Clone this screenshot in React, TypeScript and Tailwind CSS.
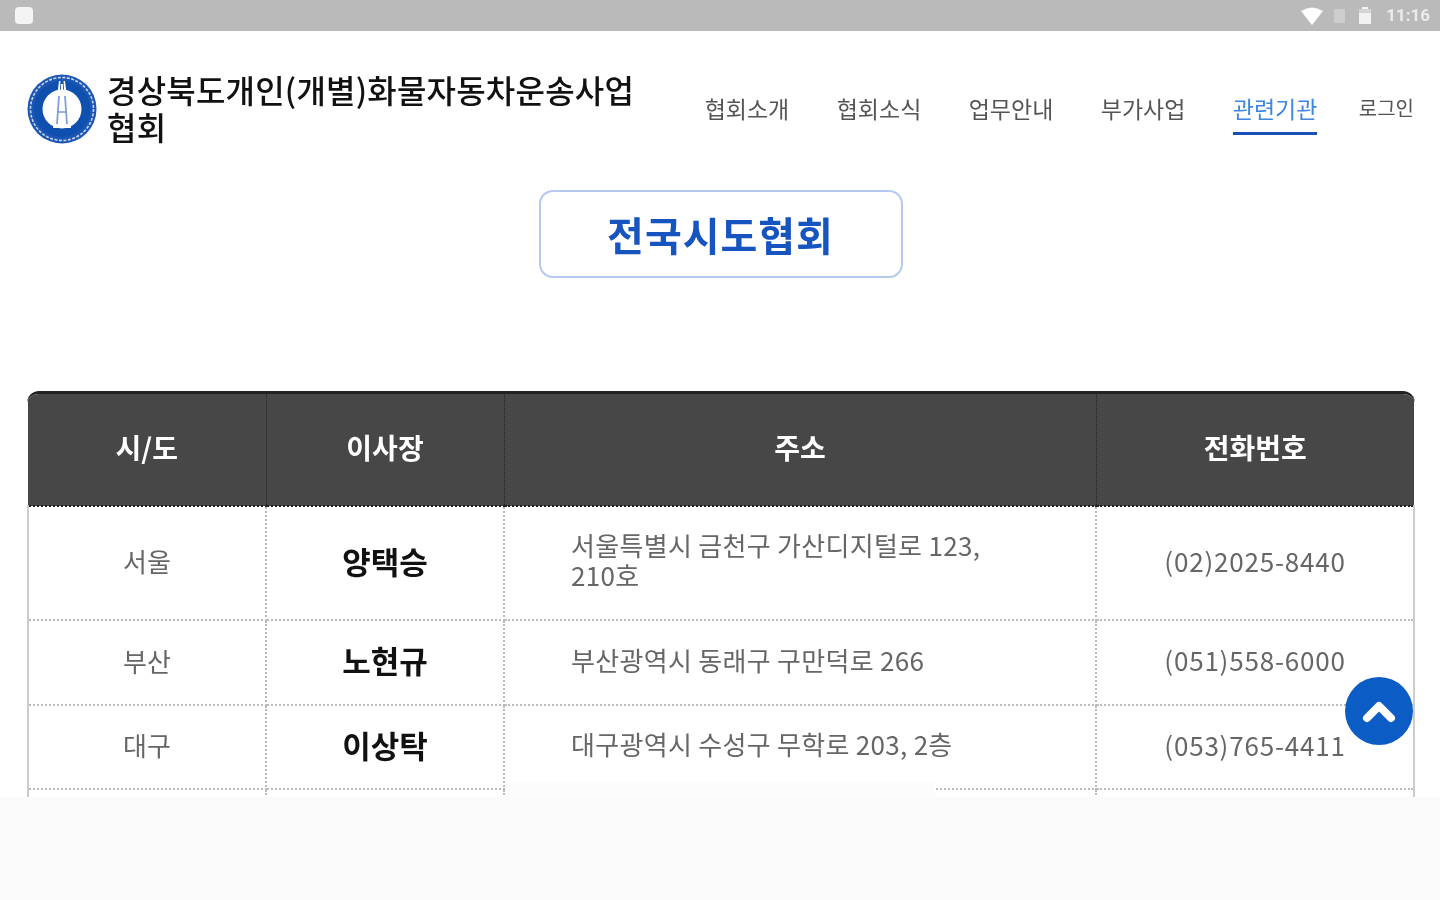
import React from 'react';

const font = { fontFamily: '"Noto Sans CJK KR", "Noto Sans", sans-serif' };

const navItems = ['협회소개', '협회소식', '업무안내', '부가사업', '관련기관'];

const rows = [
  { region: '서울', name: '양택승', address: '서울특별시 금천구 가산디지털로 123, 210호', phone: '(02)2025-8440', height: 'h-[114px]' },
  { region: '부산', name: '노현규', address: '부산광역시 동래구 구만덕로 266', phone: '(051)558-6000', height: 'h-[85px]' },
  { region: '대구', name: '이상탁', address: '대구광역시 수성구 무학로 203, 2층', phone: '(053)765-4411', height: 'h-[84px]' },
  { region: '', name: '', address: '', phone: '', height: 'h-[84px]' },
];

const Logo = () => (
  <svg width="70" height="70" viewBox="0 0 70 70" className="shrink-0">
    <circle cx="35" cy="35" r="34.5" fill="#1c56b4" />
    <circle cx="35" cy="35" r="31.5" fill="none" stroke="#c9d8f0" strokeWidth="1.6" strokeDasharray="3 1.5" />
    <circle cx="35" cy="35" r="28" fill="#0f4fae" />
    <circle cx="35" cy="35" r="19.5" fill="#ffffff" />
    <path d="M32 7 L26 54 L31 54 L33.5 7 Z" fill="#ffffff" />
    <path d="M38 7 L44 54 L39 54 L36.5 7 Z" fill="#ffffff" />
    <path d="M34 10 H36 V18 H34 Z" fill="#ffffff" />
    <path d="M32 22 L30 50 M38 22 L40 50" stroke="#7f9fd6" strokeWidth="1.8" />
    <path d="M31 38 H39" stroke="#7f9fd6" strokeWidth="1.6" />
  </svg>
);

const App = () => {
  return (
    <div className="flex h-[900px] w-full flex-col overflow-hidden bg-white blur-[0.7px]" style={font}>
      {/* Status bar */}
      <div className="flex h-[31px] shrink-0 items-center justify-between bg-[#bababa] pl-[15px] pr-[10px]">
        <div className="h-[17px] w-[18px] rounded-[4px] bg-[#f4f4f4]" />
        <div className="flex items-center">
          <svg width="24" height="18" viewBox="0 0 24 18">
            <path d="M1 4 Q12 -3 23 4 L12 18 Z" fill="#ffffff" />
          </svg>
          <div className="ml-[10px] h-[14px] w-[11px] bg-[#cdcdcd]" />
          <svg width="14" height="18" viewBox="0 0 14 18" className="ml-[13px]">
            <path d="M4 0 H10 V2 H13 V17 H1 V2 H4 Z" fill="#f2f2f2" />
            <path d="M1 2 H13 V6 H1 Z" fill="#d4d4d4" />
          </svg>
          <span className="ml-[14px] text-[17px] font-bold text-[#ececec]" style={{ fontFamily: 'Roboto, sans-serif' }}>
            11:16
          </span>
        </div>
      </div>

      <div className="relative min-h-0 flex-1 overflow-hidden">
        {/* Header */}
        <header className="flex items-center justify-between pl-[27px] pr-[26px] pt-[41px]">
          <div className="flex items-center">
            <Logo />
            <h1 className="ml-[10px] w-[540px] -translate-y-px text-[32px] font-medium leading-[37px] tracking-[0.2px] text-[#111]">
              경상북도개인(개별)화물자동차운송사업 협회
            </h1>
          </div>
          <nav className="flex items-center gap-[47.4px] pt-[8px] text-[23px] text-[#555]">
            {navItems.map((item, i) => (
              <a
                key={item}
                className={`border-b-[3px] pb-[7px] ${i === 4 ? 'border-[#1a4fb5] text-[#3f86e0]' : 'border-transparent'}`}
              >
                {item}
              </a>
            ))}
            <a className="-ml-[6px] border-b-[3px] border-transparent pb-[8px] text-[20px]">로그인</a>
          </nav>
        </header>

        {/* Title */}
        <div className="mt-[44px] flex justify-center">
          <div className="ml-[1px] flex h-[88px] w-[364px] items-center justify-center rounded-[14px] border-2 border-[#b3c9ee] text-[40px] font-bold tracking-[1px] text-[#1654c0]">
            전국시도협회
          </div>
        </div>

        {/* Table */}
        <div className="ml-[27px] mr-[25px] mt-[113px] overflow-hidden rounded-t-[12px] border-t-[3px] border-[#222]">
          <table className="w-full table-fixed border-collapse text-center">
            <thead>
              <tr className="h-[112px] bg-[#474747] text-[28px] font-bold text-white">
                <th className="w-[238px] border-r border-b-2 border-dotted border-[#222] pb-[6px] font-bold">시/도</th>
                <th className="w-[238px] border-r border-b-2 border-dotted border-[#222] pb-[6px] font-bold">이사장</th>
                <th className="w-[592px] border-r border-b-2 border-dotted border-[#222] pb-[6px] font-bold">주소</th>
                <th className="border-b-2 border-dotted border-[#222] pb-[6px] font-bold">전화번호</th>
              </tr>
            </thead>
            <tbody>
              {rows.map((row, i) => (
                <tr key={i} className={`${row.height} text-[26px] text-[#666]`}>
                  <td className="border-r-2 border-b-2 border-l-2 border-dotted border-[#bbb] border-l-[#ccc] pb-[5px] [border-left-style:solid]">
                    {row.region}
                  </td>
                  <td className="border-r-2 border-b-2 border-dotted border-[#bbb] pb-[4px] text-[31px] font-bold text-[#111]">
                    {row.name}
                  </td>
                  <td className="break-keep border-r-2 border-b-2 border-dotted border-[#bbb] px-[66px] pb-[6px] text-left leading-[30px] tracking-[0.3px]">
                    {row.address}
                  </td>
                  <td className="border-r-2 border-b-2 border-dotted border-[#bbb] border-r-[#ccc] pb-[6px] tracking-[0.8px] [border-right-style:solid]">
                    {row.phone}
                  </td>
                </tr>
              ))}
            </tbody>
          </table>
        </div>

        {/* Scroll to top */}
        <button className="absolute left-[1345px] top-[646px] flex h-[68px] w-[68px] items-center justify-center rounded-full bg-[#0b5cc4]">
          <svg width="36" height="26" viewBox="0 0 36 26">
            <path d="M6 20 L18 8 L30 20" fill="none" stroke="#ffffff" strokeWidth="8" strokeLinecap="round" strokeLinejoin="round" />
          </svg>
        </button>

        {/* Sheet overlapping the cut-off row */}
        <div className="absolute left-[505px] top-[751px] h-[16px] w-[430px] bg-[#fcfcfc]" />
      </div>

      {/* Bottom area */}
      <div className="h-[103px] shrink-0 bg-[#fafafa]" />
    </div>
  );
};

export default App;
